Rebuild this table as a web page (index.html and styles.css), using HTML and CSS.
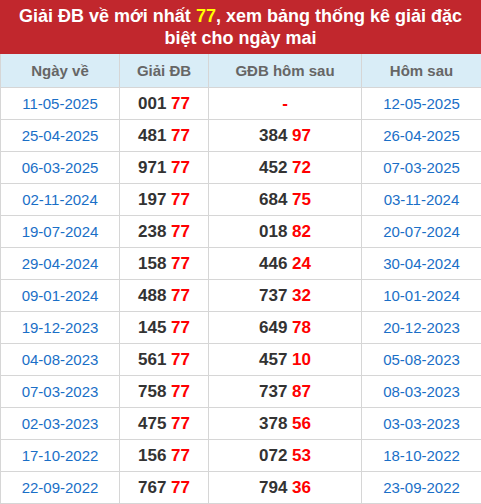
FILE: index.html
```html
<!DOCTYPE html>
<html>
<head>
<meta charset="utf-8">
<link rel="stylesheet" href="styles.css">
</head>
<body>
<div class="box">
  <h2 class="title">Giải ĐB về mới nhất <span class="hl">77</span>, xem bảng thống kê giải đặc biệt cho ngày mai</h2>
  <table class="tbl">
    <colgroup><col class="c1"><col class="c2"><col class="c3"><col class="c4"></colgroup>
    <thead>
      <tr><th>Ngày về</th><th>Giải ĐB</th><th>GĐB hôm sau</th><th>Hôm sau</th></tr>
    </thead>
    <tbody>
      <tr><td class="d">11-05-2025</td><td class="n">001 <em>77</em></td><td class="n"><em>-</em></td><td class="d">12-05-2025</td></tr>
      <tr><td class="d">25-04-2025</td><td class="n">481 <em>77</em></td><td class="n">384 <em>97</em></td><td class="d">26-04-2025</td></tr>
      <tr><td class="d">06-03-2025</td><td class="n">971 <em>77</em></td><td class="n">452 <em>72</em></td><td class="d">07-03-2025</td></tr>
      <tr><td class="d">02-11-2024</td><td class="n">197 <em>77</em></td><td class="n">684 <em>75</em></td><td class="d">03-11-2024</td></tr>
      <tr><td class="d">19-07-2024</td><td class="n">238 <em>77</em></td><td class="n">018 <em>82</em></td><td class="d">20-07-2024</td></tr>
      <tr><td class="d">29-04-2024</td><td class="n">158 <em>77</em></td><td class="n">446 <em>24</em></td><td class="d">30-04-2024</td></tr>
      <tr><td class="d">09-01-2024</td><td class="n">488 <em>77</em></td><td class="n">737 <em>32</em></td><td class="d">10-01-2024</td></tr>
      <tr><td class="d">19-12-2023</td><td class="n">145 <em>77</em></td><td class="n">649 <em>78</em></td><td class="d">20-12-2023</td></tr>
      <tr><td class="d">04-08-2023</td><td class="n">561 <em>77</em></td><td class="n">457 <em>10</em></td><td class="d">05-08-2023</td></tr>
      <tr><td class="d">07-03-2023</td><td class="n">758 <em>77</em></td><td class="n">737 <em>87</em></td><td class="d">08-03-2023</td></tr>
      <tr><td class="d">02-03-2023</td><td class="n">475 <em>77</em></td><td class="n">378 <em>56</em></td><td class="d">03-03-2023</td></tr>
      <tr><td class="d">17-10-2022</td><td class="n">156 <em>77</em></td><td class="n">072 <em>53</em></td><td class="d">18-10-2022</td></tr>
      <tr><td class="d">22-09-2022</td><td class="n">767 <em>77</em></td><td class="n">794 <em>36</em></td><td class="d">23-09-2022</td></tr>
    </tbody>
  </table>
</div>
</body>
</html>
```
FILE: styles.css
```css
html, body { margin: 0; padding: 0; background: #fff; }
body { font-family: "Liberation Sans", Arial, sans-serif; }
.box { width: 481px; }
.title {
  margin: 0;
  background: #c1272d;
  color: #fff;
  font-size: 18px;
  font-weight: bold;
  line-height: 22px;
  text-align: center;
  height: 54px;
  box-sizing: border-box;
  padding: 5px 4px 0;
}
.hl { color: #ffff00; }
.tbl {
  width: 481px;
  border-collapse: collapse;
  table-layout: fixed;
}
.c1 { width: 119px; }
.c2 { width: 89px; }
.c3 { width: 153px; }
.c4 { width: 120px; }
.tbl th, .tbl td {
  border: 1px solid #d6d6d6;
  text-align: center;
  padding: 0;
}
.tbl tr:first-child th { border-top: none; }
.tbl th {
  background: #d9edf7;
  color: #666;
  font-size: 15px;
  font-weight: bold;
  height: 33px;
}
.tbl td { height: 31px; }
.d { color: #1a6fc7; font-size: 15px; }
.n { color: #333; font-size: 17px; font-weight: bold; }
.n em { font-style: normal; color: #ff0000; }
```
